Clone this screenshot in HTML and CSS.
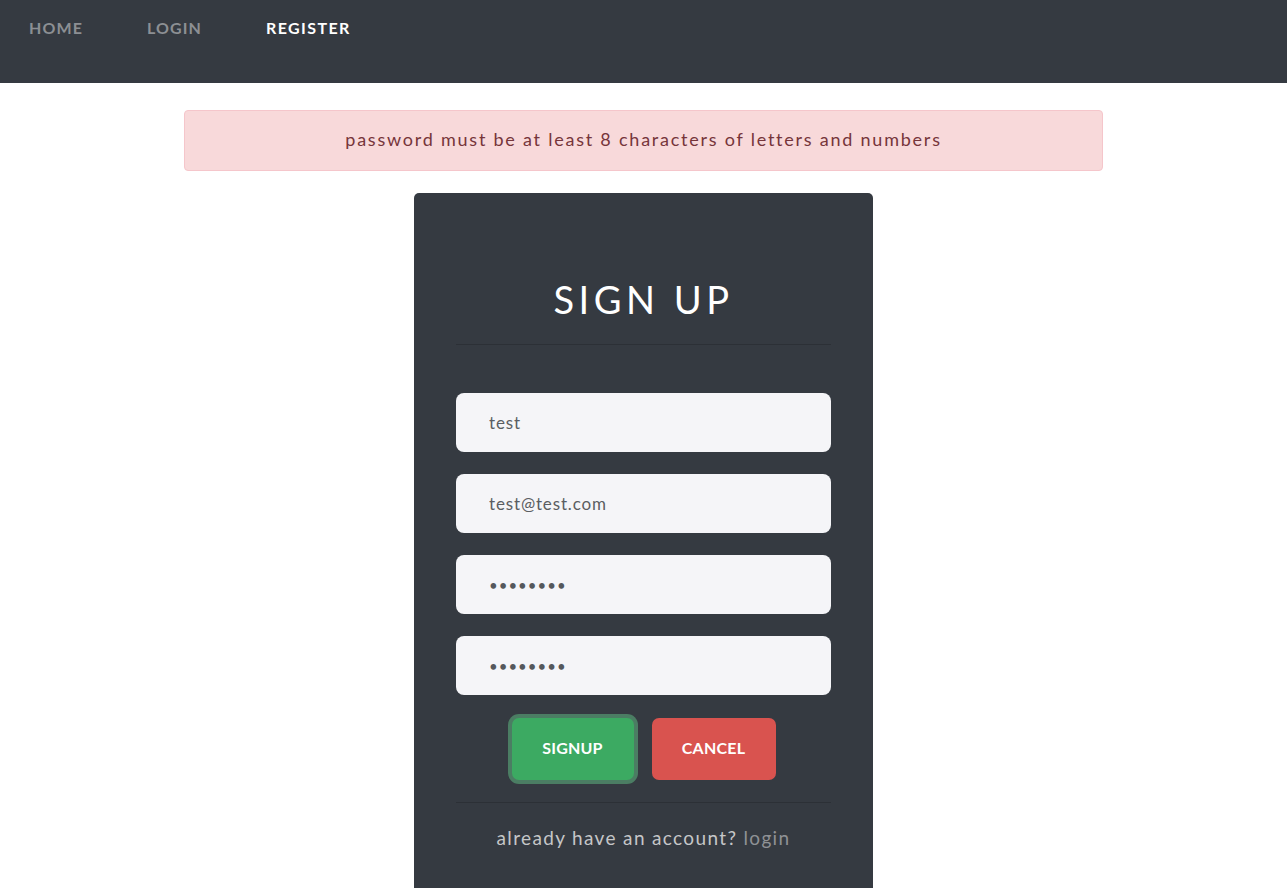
FILE: index.html
```html
<!DOCTYPE html>
<html>
<head>
<meta charset="utf-8">
<link rel="stylesheet" href="styles.css">
</head>
<body>
<nav class="navbar">
  <a class="nav-link" href="#">HOME</a>
  <a class="nav-link" href="#">LOGIN</a>
  <a class="nav-link active" href="#">REGISTER</a>
</nav>
<main class="main">
  <div class="alert">password must be at least 8 characters of letters and numbers</div>
  <form class="card">
    <h1 class="title">SIGN UP</h1>
    <hr class="rule">
    <div class="fields">
      <input class="field" type="text" value="test">
      <input class="field" type="text" value="test@test.com">
      <input class="field" type="password" value="12345678">
      <input class="field" type="password" value="12345678">
    </div>
    <div class="actions">
      <button class="btn btn-signup" type="button">SIGNUP</button>
      <button class="btn btn-cancel" type="button">CANCEL</button>
    </div>
    <hr class="rule rule-bottom">
    <p class="footer">already have an account? <a class="footer-link" href="#">login</a></p>
  </form>
</main>
</body>
</html>
```

FILE: styles.css
```css
html, body {
  margin: 0;
  padding: 0;
  background: #ffffff;
  font-family: Lato, "Noto Sans", sans-serif;
}

.navbar {
  height: 83px;
  background: #353a41;
  display: flex;
  align-items: flex-start;
  padding: 18px 0 0 29px;
  box-sizing: border-box;
}

.nav-link {
  font-size: 16px;
  font-weight: 700;
  letter-spacing: 1.1px;
  color: #8c8f93;
  text-decoration: none;
  line-height: 20px;
  margin-right: 64px;
}

.nav-link.active {
  color: #ffffff;
  letter-spacing: 1.4px;
}

.main {
  display: flex;
  flex-direction: column;
  align-items: center;
  padding-top: 27px;
}

.alert {
  width: 919px;
  height: 61px;
  box-sizing: border-box;
  background: #f8d9da;
  border: 1px solid #f5c6cb;
  border-radius: 4px;
  color: #76353a;
  font-size: 18px;
  letter-spacing: 1.77px;
  display: flex;
  align-items: center;
  justify-content: center;
  padding-bottom: 4px;
}

.card {
  margin-top: 22px;
  width: 459px;
  height: 720px;
  box-sizing: border-box;
  background: #353a41;
  border-radius: 5px 5px 0 0;
  padding: 76px 42px 0;
  display: flex;
  flex-direction: column;
}

.title {
  margin: 0;
  text-align: center;
  color: #ffffff;
  font-size: 38px;
  font-weight: 400;
  letter-spacing: 4.5px;
  line-height: 60px;
}

.rule {
  border: 0;
  border-top: 1px solid #2c3036;
  margin: 15px 0 0;
  width: 100%;
}

.fields {
  display: flex;
  flex-direction: column;
  gap: 22px;
  margin-top: 48px;
}

.field {
  height: 59px;
  box-sizing: border-box;
  border: 0;
  border-radius: 8px;
  background: #f5f5f8;
  padding: 0 33px;
  font-family: Lato, "Noto Sans", sans-serif;
  font-size: 17px;
  letter-spacing: 0.85px;
  color: #5b5e62;
  outline: none;
}

.field[type="password"] {
  font-size: 15px;
  letter-spacing: 1px;
  color: #55585c;
}

.actions {
  display: flex;
  justify-content: center;
  gap: 18px;
  margin-top: 23px;
}

.btn {
  height: 62px;
  border: 0;
  border-radius: 7px;
  padding: 0 0 4px;
  color: #ffffff;
  font-family: Lato, "Noto Sans", sans-serif;
  font-size: 16px;
  font-weight: 700;
  letter-spacing: 0.2px;
  cursor: pointer;
}

.btn-signup {
  width: 122px;
  background: #3caa62;
  box-shadow: 0 0 0 4px #4b7d63;
}

.btn-cancel {
  width: 124px;
  background: #d9534f;
}

.rule-bottom {
  margin-top: 22px;
}

.footer {
  margin: 23px 0 0;
  text-align: center;
  font-size: 19px;
  letter-spacing: 1.35px;
  color: #c5c6c8;
}

.footer-link {
  color: #8f9195;
  text-decoration: none;
}
```
